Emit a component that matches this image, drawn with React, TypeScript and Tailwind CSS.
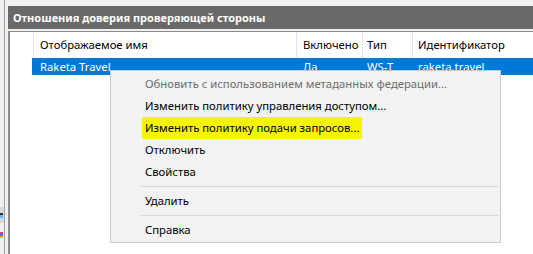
export default function App() {
  return (
    <div className="relative w-[533px] h-[254px] overflow-hidden bg-[#f0f0f0] flex font-['Noto_Sans',sans-serif] text-[11.3px] leading-none">
      {/* cut-off tree pane on the left */}
      <div className="w-[4px] flex flex-col">
        <div className="h-[207px]" />
        <div className="h-[16px] bg-[#d9d9d9] flex flex-col justify-center">
          <div className="h-[2px] w-[3px] bg-[#2a2a2a]" />
          <div className="h-[3px] w-[3px] bg-[#6fb7e8]" />
        </div>
        <div className="h-[9px]" />
        <div className="h-[6px] w-[3px] flex flex-col">
          <div className="h-[2px] bg-[#e0407a]" />
          <div className="h-[2px] bg-[#3a6fd8]" />
          <div className="h-[2px] bg-[#e8b430]" />
        </div>
      </div>
      <div className="w-px bg-[#a0a0a0]" />
      <div className="w-[3px]" />

      {/* main pane */}
      <div className="flex-1 flex flex-col pt-[6px]">
        <div className="h-[23px] bg-[#696969] text-white font-bold text-[11px] pl-[5px] flex items-center">
          Отношения доверия проверяющей стороны
        </div>
        <div className="h-[2px] bg-[#f0f0f0]" />
        <div className="flex-1 bg-white border-l-2 border-t border-[#8c8c8c] flex flex-col">
          {/* column header */}
          <div className="h-[26px] flex text-black">
            <div className="w-[23px]" />
            <div className="w-[263px] border-l border-[#e5e5e5] pl-[6px] flex items-center">Отображаемое имя</div>
            <div className="w-[66px] border-l border-[#e5e5e5] pl-[6px] flex items-center">Включено</div>
            <div className="w-[50px] border-l border-[#e5e5e5] pl-[4px] flex items-center">Тип</div>
            <div className="flex-1 border-l border-[#e5e5e5] pl-[5px] flex items-center">Идентификатор</div>
          </div>
          {/* selected row */}
          <div className="h-[17px] flex text-white">
            <div className="w-[22px]" />
            <div className="flex-1 bg-[#0078d7] flex">
              <div className="w-px" />
              <div className="w-[263px] pl-[7px] flex items-center">Raketa Travel</div>
              <div className="w-[66px] pl-[7px] flex items-center">Да</div>
              <div className="w-[50px] pl-[5px] flex items-center">WS-T</div>
              <div className="flex-1 pl-[6px] flex items-center">raketa.travel</div>
            </div>
          </div>
        </div>
      </div>

      {/* context menu */}
      <div className="absolute left-[110px] top-[70px] w-[391px] border border-[#cccccc] bg-[#f2f2f2] pt-[2px] pb-px flex flex-col text-black">
        <div className="h-[22px] pl-[34px] flex items-center text-[#6d6d6d]">Обновить с использованием метаданных федерации...</div>
        <div className="h-[22px] pl-[34px] flex items-center">Изменить политику управления доступом...</div>
        <div className="h-[22px] pl-[31px] flex items-center">
          <span className="bg-[#f5f500] px-[3px] py-[5px]">Изменить политику подачи запросов...</span>
        </div>
        <div className="h-[22px] pl-[34px] flex items-center">Отключить</div>
        <div className="h-[22px] pl-[34px] flex items-center">Свойства</div>
        <div className="h-px bg-[#d7d7d7] ml-[30px] mr-[2px] my-[3px]" />
        <div className="h-[22px] pl-[34px] flex items-center">Удалить</div>
        <div className="h-px bg-[#d7d7d7] ml-[30px] mr-[2px] my-[3px]" />
        <div className="h-[22px] pl-[34px] flex items-center">Справка</div>
      </div>
    </div>
  );
}
